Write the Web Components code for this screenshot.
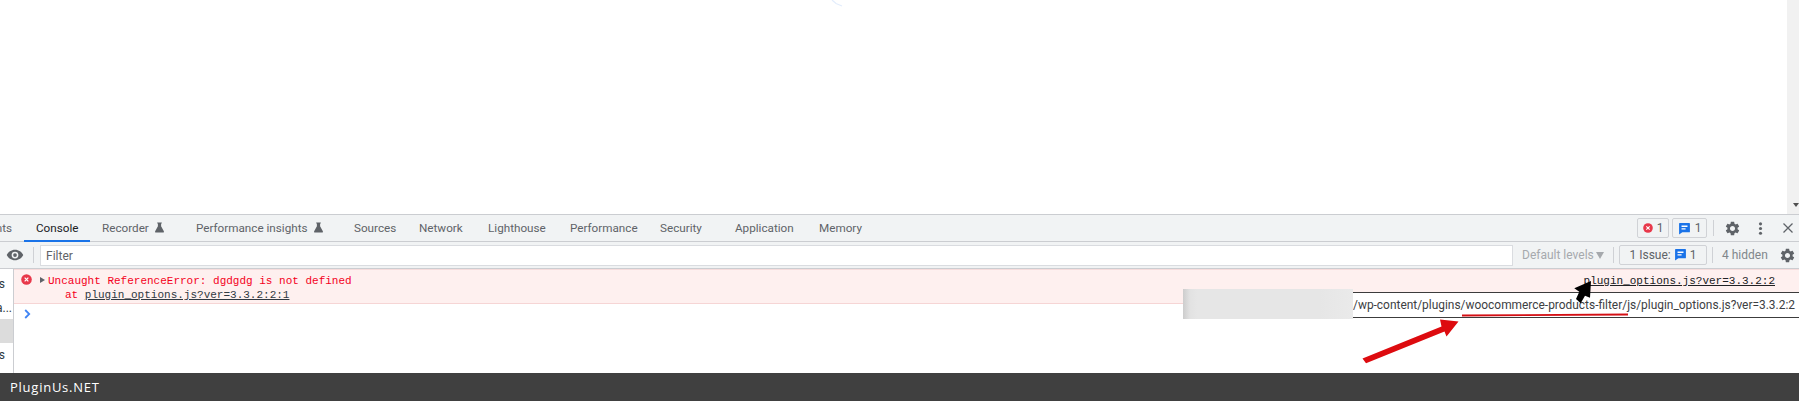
<!DOCTYPE html>
<html>
<head>
<meta charset="utf-8">
<title>Console</title>
<style>
  html, body { margin: 0; padding: 0; background: #fff; }
  body { width: 1799px; height: 401px; overflow: hidden; font-family: Roboto, "Liberation Sans", sans-serif; }
</style>
</head>
<body>
<app-page>
  <page-view></page-view>
  <dev-panel>
    <tab-bar>
      <dev-tab width="24" clip>nts</dev-tab>
      <dev-tab width="66" active>Console</dev-tab>
      <dev-tab width="94" flask>Recorder</dev-tab>
      <dev-tab width="158" flask>Performance insights</dev-tab>
      <dev-tab width="65">Sources</dev-tab>
      <dev-tab width="69">Network</dev-tab>
      <dev-tab width="82">Lighthouse</dev-tab>
      <dev-tab width="90">Performance</dev-tab>
      <dev-tab width="75">Security</dev-tab>
      <dev-tab width="84">Application</dev-tab>
      <dev-tab width="68">Memory</dev-tab>
    </tab-bar>
    <filter-bar></filter-bar>
    <console-area>
      <console-message></console-message>
    </console-area>
  </dev-panel>
  <site-footer>PluginUs.NET</site-footer>
  <url-overlay></url-overlay>
</app-page>

<script>
const ICONS = {
  gear: '<path fill="currentColor" d="M19.14 12.94c.04-.3.06-.61.06-.94 0-.32-.02-.64-.07-.94l2.03-1.58c.18-.14.23-.41.12-.61l-1.92-3.32c-.12-.22-.37-.29-.59-.22l-2.39.96c-.5-.38-1.03-.7-1.62-.94l-.36-2.54c-.04-.24-.24-.41-.48-.41h-3.84c-.24 0-.43.17-.47.41l-.36 2.54c-.59.24-1.13.57-1.62.94l-2.39-.96c-.22-.08-.47 0-.59.22L2.74 8.87c-.12.21-.08.47.12.61l2.03 1.58c-.05.3-.09.63-.09.94s.02.64.07.94l-2.03 1.58c-.18.14-.23.41-.12.61l1.92 3.32c.12.22.37.29.59.22l2.39-.96c.5.38 1.03.7 1.62.94l.36 2.54c.05.24.24.41.48.41h3.84c.24 0 .44-.17.47-.41l.36-2.54c.59-.24 1.13-.56 1.62-.94l2.39.96c.22.08.47 0 .59-.22l1.92-3.32c.12-.22.07-.47-.12-.61l-2.01-1.58zM12 15.6c-1.98 0-3.6-1.62-3.6-3.6s1.62-3.6 3.6-3.6 3.6 1.62 3.6 3.6-1.62 3.6-3.6 3.6z"/>',
  flask: '<path fill="currentColor" d="M7 1h10v2.500h-1.500v5.500L21.500 20c.6 1.200-.1 3-1.700 3H4.200c-1.600 0-2.300-1.800-1.700-3L8.500 9V3.500H7z"/>',
  error: '<circle cx="12" cy="12" r="11.500" fill="#e8384a"/><path d="M8 8l8 8M16 8l-8 8" stroke="#fff" stroke-width="2.600" fill="none"/>',
  message: '<path fill="#1a73e8" d="M3 2h18a1 1 0 0 1 1 1v15a1 1 0 0 1-1 1H8l-6 4V3a1 1 0 0 1 1-1z"/><path fill="#fff" d="M6.500 6.500h11v2.500h-11zM6.500 11.500h7.500v2.500H6.500z"/>',
  eye: '<path fill="currentColor" d="M12 5C7 5 2.700 8.100 1 12c1.700 3.900 6 7 11 7s9.300-3.100 11-7c-1.700-3.900-6-7-11-7zm0 11.500a4.500 4.500 0 1 1 0-9 4.500 4.500 0 0 1 0 9zm0-7a2.500 2.500 0 1 0 0 5 2.500 2.500 0 0 0 0-5z"/>',
  dots: '<circle cx="12" cy="4.500" r="2.500" fill="currentColor"/><circle cx="12" cy="12" r="2.500" fill="currentColor"/><circle cx="12" cy="19.500" r="2.500" fill="currentColor"/>',
  close: '<path d="M3 3l18 18M21 3L3 21" stroke="currentColor" stroke-width="2.500" fill="none"/>'
};

class DevIcon extends HTMLElement {
  connectedCallback() {
    const size = this.getAttribute('size') || 16;
    const root = this.shadowRoot || this.attachShadow({ mode: 'open' });
    root.innerHTML = `
      <style>
        :host { display: inline-flex; flex: none; width: ${size}px; height: ${size}px; color: ${this.getAttribute('color') || '#5f6368'}; }
        svg { width: 100%; height: 100%; display: block; }
      </style>
      <svg viewBox="0 0 24 24">${ICONS[this.getAttribute('name')]}</svg>`;
  }
}

class AppPage extends HTMLElement {
  constructor() {
    super();
    this.attachShadow({ mode: 'open' }).innerHTML = `
      <style>
        :host { display: flex; flex-direction: column; position: relative; width: 1799px; height: 401px; overflow: hidden; }
      </style>
      <slot></slot>`;
  }
}

class PageView extends HTMLElement {
  constructor() {
    super();
    this.attachShadow({ mode: 'open' }).innerHTML = `
      <style>
        :host { display: flex; height: 214px; flex: none; position: relative; background: #fff; }
        .main { flex: 1; }
        .scroll { width: 12px; background: #f1f1f1; display: flex; align-items: flex-end; justify-content: flex-end; }
        .arrow { width: 0; height: 0; border: 3.500px solid transparent; border-top: 4px solid #505050; border-bottom: 0; margin-bottom: 7px; }
        .mark { position: absolute; left: 830px; top: 0; }
      </style>
      <div class="main"></div>
      <div class="scroll"><div class="arrow"></div></div>
      <svg class="mark" width="14" height="8"><path d="M2 0L6 3.500 12 6" stroke="#e3edfc" stroke-width="1.200" fill="none"/></svg>`;
  }
}

class DevPanel extends HTMLElement {
  constructor() {
    super();
    this.attachShadow({ mode: 'open' }).innerHTML = `
      <style>
        :host { display: flex; flex-direction: column; flex: 1; min-height: 0; border-top: 1px solid #cbcdd1; }
      </style>
      <slot></slot>`;
  }
}

class TabBar extends HTMLElement {
  constructor() {
    super();
    this.attachShadow({ mode: 'open' }).innerHTML = `
      <style>
        :host { display: flex; align-items: stretch; flex: none; background: #f1f3f4; border-bottom: 1px solid #cbcdd1; box-sizing: border-box; height: 27px; }
        .right { margin-left: auto; display: flex; align-items: center; }
        .badge { box-sizing: border-box; height: 20px; border: 1px solid #d0d2d6; border-radius: 2px; display: flex; align-items: center; justify-content: center; gap: 4px; font-size: 12px; color: #5f6368; }
        .err { width: 32px; }
        .msg { width: 35px; margin-left: 3px; }
        .sep { width: 1px; height: 16px; background: #cfd1d5; margin: 0 10px 0 6px; }
        .gear { margin-right: 12px; }
        .dots { margin-right: 14px; }
        .close { margin-right: 5px; }
      </style>
      <slot></slot>
      <div class="right">
        <div class="badge err"><dev-icon name="error" size="10"></dev-icon>1</div>
        <div class="badge msg"><dev-icon name="message" size="13"></dev-icon>1</div>
        <div class="sep"></div>
        <dev-icon class="gear" name="gear" size="17"></dev-icon>
        <dev-icon class="dots" name="dots" size="15"></dev-icon>
        <dev-icon class="close" name="close" size="12"></dev-icon>
      </div>`;
  }
}

class DevTab extends HTMLElement {
  connectedCallback() {
    const root = this.shadowRoot || this.attachShadow({ mode: 'open' });
    const active = this.hasAttribute('active');
    const clip = this.hasAttribute('clip');
    root.innerHTML = `
      <style>
        :host { display: flex; align-items: center; flex: none; box-sizing: border-box; width: ${this.getAttribute('width')}px;
          padding: ${clip ? '1px 12px 0 0' : '1px 0 0 12px'}; justify-content: ${clip ? 'flex-end' : 'flex-start'};
          font-size: 11.7px; color: ${active ? '#202124' : '#5f6368'}; white-space: nowrap;
          border-bottom: 2px solid ${active ? '#1a73e8' : 'transparent'}; margin-bottom: -1px; }
        dev-icon { margin-left: 5px; margin-top: -2px; }
      </style>
      <slot></slot>${this.hasAttribute('flask') ? '<dev-icon name="flask" size="11"></dev-icon>' : ''}`;
  }
}

class FilterBar extends HTMLElement {
  constructor() {
    super();
    this.attachShadow({ mode: 'open' }).innerHTML = `
      <style>
        :host { display: flex; align-items: center; height: 27px; flex: none; box-sizing: border-box; background: #f1f3f4; border-bottom: 1px solid #cbcdd1; font-size: 12px; color: #5f6368; }
        .eye { margin-left: 6px; }
        .sep { width: 1px; height: 16px; background: #cfd1d5; flex: none; }
        .sep.first { margin: 0 6px 0 9px; }
        .input { box-sizing: border-box; width: 1473px; height: 21px; background: #fff; border: 1px solid #dadce0; padding: 1px 0 0 5px; display: flex; align-items: center; color: #5f6368; flex: none; }
        .levels { margin-left: 9px; width: 71px; color: #a6a9ad; white-space: nowrap; flex: none; }
        .caret { width: 0; height: 0; border: 4px solid transparent; border-top: 7px solid #a6a9ad; border-bottom: 0; margin: 1px 0 0 3px; flex: none; }
        .sep.second { margin: 0 5px 0 9px; }
        .issue { box-sizing: border-box; width: 88px; height: 20px; margin-bottom: 1px; border: 1px solid #d0d2d6; border-radius: 2px; display: flex; align-items: center; justify-content: center; gap: 3px; white-space: nowrap; flex: none; }
        .sep.third { margin: 0 9px 0 5px; }
        .hidden { width: 47px; color: #80868b; white-space: nowrap; flex: none; }
        .gear { margin-left: 10px; }
      </style>
      <dev-icon class="eye" name="eye" size="18"></dev-icon>
      <div class="sep first"></div>
      <div class="input">Filter</div>
      <div class="levels">Default levels</div>
      <div class="caret"></div>
      <div class="sep second"></div>
      <div class="issue">1 Issue: <dev-icon name="message" size="13"></dev-icon>1</div>
      <div class="sep third"></div>
      <div class="hidden">4 hidden</div>
      <dev-icon class="gear" name="gear" size="17"></dev-icon>`;
  }
}

class ConsoleArea extends HTMLElement {
  constructor() {
    super();
    this.attachShadow({ mode: 'open' }).innerHTML = `
      <style>
        :host { display: flex; flex: 1; min-height: 0; background: #fff; }
        .side { width: 14px; box-sizing: border-box; border-right: 1px solid #cbcdd1; flex: none; font-size: 12px; color: #303942; display: flex; flex-direction: column; overflow: hidden; white-space: nowrap; }
        .side div { height: 24px; line-height: 24px; flex: none; display: flex; justify-content: flex-end; padding-right: 8px; }
        .side .one { margin-top: 3px; }
        .side .two { height: 23px; padding-right: 1px; }
        .side .sel { background: #dcdcdc; }
        .log { flex: 1; min-width: 0; }
        .prompt { margin: 5px 0 0 10px; height: 12px; }
        svg { display: block; }
      </style>
      <div class="side">
        <div class="one">s</div>
        <div class="two">a...</div>
        <div class="sel"></div>
        <div>s</div>
      </div>
      <div class="log">
        <slot></slot>
        <div class="prompt"><svg width="7" height="10"><path d="M1.200 1L5.200 5 1.200 9" stroke="#4285f4" stroke-width="1.800" fill="none"/></svg></div>
      </div>`;
  }
}

class ConsoleMessage extends HTMLElement {
  constructor() {
    super();
    this.attachShadow({ mode: 'open' }).innerHTML = `
      <style>
        :host { display: flex; height: 35px; box-sizing: border-box; background: #fef0ef; border-top: 1px solid #f6dcdc; border-bottom: 1px solid #f6d5d5; font: 11px/14px "Liberation Mono", monospace; color: #f4001c; padding-top: 4px; }
        .icon { margin: 0 0 0 7px; height: 11px; }
        .tri { width: 0; height: 0; margin: 3px 3px 0 8px; border: 3.500px solid transparent; border-left: 5px solid #5f6368; border-right: 0; flex: none; }
        .body { flex: 1; }
        .line { display: block; white-space: nowrap; }
        .line.at { padding-left: 17px; }
        .link { color: #303942; text-decoration: underline; }
        .src { color: #202124; text-decoration: underline; margin-right: 24px; }
      </style>
      <dev-icon class="icon" name="error" size="11"></dev-icon>
      <div class="tri"></div>
      <div class="body">
        <span class="line">Uncaught ReferenceError: dgdgdg is not defined</span>
        <span class="line at">at <span class="link">plugin_options.js?ver=3.3.2:2:1</span></span>
      </div>
      <div class="src">plugin_options.js?ver=3.3.2:2</div>`;
  }
}

class SiteFooter extends HTMLElement {
  constructor() {
    super();
    this.attachShadow({ mode: 'open' }).innerHTML = `
      <style>
        :host { display: flex; align-items: center; height: 28px; flex: none; background: #404040; color: #fff; padding-left: 10px; font: 13px "Open Sans", sans-serif; letter-spacing: .75px; }
      </style>
      <slot></slot>`;
  }
}

class UrlOverlay extends HTMLElement {
  constructor() {
    super();
    this.attachShadow({ mode: 'open' }).innerHTML = `
      <style>
        :host { position: absolute; left: 0; top: 0; width: 1799px; height: 401px; pointer-events: none; }
        .blur { position: absolute; left: 1183px; top: 289px; width: 170px; height: 30px;
          background: linear-gradient(90deg, #cdcdcd, #e2e2e2 7px, #e6e6e6 14px, #e6e6e6 80%, #eaeaea), #e6e6e6; }
        .url { position: absolute; left: 1353px; top: 292px; width: 446px; height: 26px; box-sizing: border-box; background: #fff; border-top: 1px solid #3c3c3c; border-bottom: 1px solid #3c3c3c; font: 11.93px/24px Roboto, sans-serif; color: #3c4043; white-space: nowrap; overflow: hidden; }
        svg { position: absolute; left: 0; top: 0; }
      </style>
      <div class="blur"></div>
      <div class="url">/wp-content/plugins/woocommerce-products-filter/js/plugin_options.js?ver=3.3.2:2</div>
      <svg width="1799" height="401">
        <path d="M1462 315.500L1628 314.500" stroke="#d40f14" stroke-width="1.800" fill="none"/>
        <path d="M1362.500 358.500L1441.500 326.500 1440 319.500 1458.500 321.500 1446.500 336.500 1444.500 331.500 1366 363.300z" fill="#dd0b0f"/>
        <path d="M1591 281L1574.300 288.300 1579.300 291.700 1576 299 1580.700 303.300 1585 295.700 1590 297.700z" fill="#000"/>
      </svg>`;
  }
}

customElements.define('dev-icon', DevIcon);
customElements.define('app-page', AppPage);
customElements.define('page-view', PageView);
customElements.define('dev-panel', DevPanel);
customElements.define('tab-bar', TabBar);
customElements.define('dev-tab', DevTab);
customElements.define('filter-bar', FilterBar);
customElements.define('console-area', ConsoleArea);
customElements.define('console-message', ConsoleMessage);
customElements.define('site-footer', SiteFooter);
customElements.define('url-overlay', UrlOverlay);
</script>
</body>
</html>
